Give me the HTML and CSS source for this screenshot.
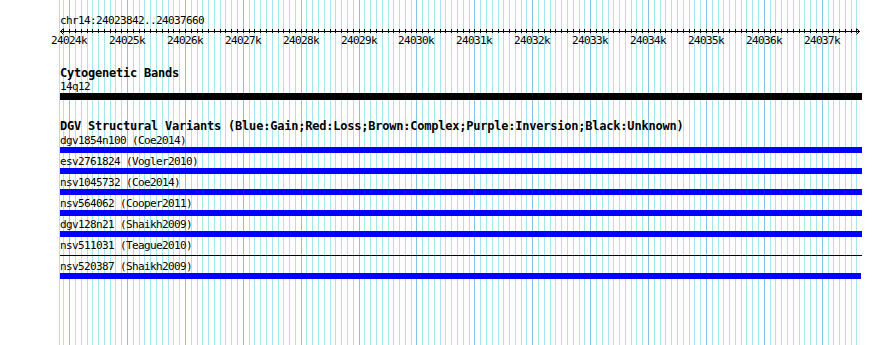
FILE: index.html
```html
<!DOCTYPE html>
<html lang="en">
<head>
<meta charset="utf-8">
<title>chr14:24023842..24037660</title>
<link rel="stylesheet" href="styles.css">
</head>
<body>
<div class="panel">
  <svg class="grid" id="grid" width="890" height="345" xmlns="http://www.w3.org/2000/svg"></svg>
  <div class="content">
    <div class="ruler">
      <div class="seg-label">chr14:24023842..24037660</div>
      <svg class="scale" id="scale" width="890" height="20" xmlns="http://www.w3.org/2000/svg"></svg>
    </div>

    <section class="track cyto">
      <div class="track-title">Cytogenetic Bands</div>
      <div class="feat-label">14q12</div>
      <div class="band"></div>
    </section>

    <section class="track dgv">
      <div class="track-title">DGV Structural Variants (Blue:Gain;Red:Loss;Brown:Complex;Purple:Inversion;Black:Unknown)</div>
      <div class="feature"><div class="feat-label">dgv1854n100 (Coe2014)</div><div class="bar gain"></div></div>
      <div class="feature"><div class="feat-label">esv2761824 (Vogler2010)</div><div class="bar gain"></div></div>
      <div class="feature"><div class="feat-label">nsv1045732 (Coe2014)</div><div class="bar gain"></div></div>
      <div class="feature"><div class="feat-label">nsv564062 (Cooper2011)</div><div class="bar gain"></div></div>
      <div class="feature"><div class="feat-label">dgv128n21 (Shaikh2009)</div><div class="bar gain"></div></div>
      <div class="feature"><div class="feat-label">nsv511031 (Teague2010)</div><div class="bar unknown"></div></div>
      <div class="feature"><div class="feat-label">nsv520387 (Shaikh2009)</div><div class="bar gain short"></div></div>
    </section>
  </div>
</div>
<script src="script.js"></script>
</body>
</html>
```

FILE: styles.css
```css
html, body {
  margin: 0;
  padding: 0;
  background: #ffffff;
}

.panel {
  position: relative;
  width: 890px;
  height: 345px;
  overflow: hidden;
  font-family: "DejaVu Sans Mono", "Liberation Mono", monospace;
  color: #000;
}

.grid {
  position: absolute;
  left: 0;
  top: 0;
  z-index: 0;
}

.grid .minor { stroke: #a8e6ee; stroke-width: 1; }
.grid .major { stroke: #88c4e4; stroke-width: 1; }

.content {
  position: relative;
  z-index: 1;
}

.ruler {
  padding-top: 14px;
}

.seg-label,
.feat-label {
  padding-left: 60px;
  height: 13px;
  line-height: 13px;
  font-size: 11px;
  letter-spacing: -0.62px;
  white-space: nowrap;
}

.scale {
  display: block;
}

.scale line,
.scale polyline {
  stroke: #000;
  stroke-width: 1;
  fill: none;
}

.scale text {
  font-family: "DejaVu Sans Mono", "Liberation Mono", monospace;
  font-size: 11px;
  letter-spacing: -0.62px;
  fill: #000;
}

.track {
  display: flex;
  flex-direction: column;
}

.cyto {
  margin-top: 20px;
}

.dgv {
  margin-top: 20px;
}

.track-title {
  padding-left: 60px;
  height: 13px;
  line-height: 13px;
  font-size: 12px;
  font-weight: bold;
  letter-spacing: -0.22px;
  white-space: nowrap;
}

.dgv .track-title {
  height: 14px;
}

.band {
  margin-left: 60px;
  width: 802px;
  height: 7px;
  background: #000;
}

.feature {
  display: flex;
  flex-direction: column;
  padding-bottom: 2px;
}

.bar {
  margin-left: 60px;
  width: 802px;
  height: 6px;
}

.bar.gain {
  background: #0000ff;
}

.bar.short {
  width: 801px;
}

.bar.unknown {
  display: flex;
  align-items: center;
}

.bar.unknown::before {
  content: "";
  display: block;
  width: 100%;
  height: 1px;
  background: #000;
}
```

FILE: script.js
```js
(function () {
  var NS = 'http://www.w3.org/2000/svg';
  var start = 24023842, end = 24037660, x0 = 60, scale = 0.05789;
  function px(bp) { return Math.round(x0 + (bp - start) * scale); }
  function el(svg, name, attrs) {
    var e = document.createElementNS(NS, name);
    for (var k in attrs) e.setAttribute(k, attrs[k]);
    svg.appendChild(e);
    return e;
  }

  var grid = document.getElementById('grid');
  el(grid, 'line', { x1: 59.5, y1: 0, x2: 59.5, y2: 345, 'class': 'minor', 'shape-rendering': 'crispEdges' });
  for (var bp = 24023900; bp <= end; bp += 100) {
    var x = px(bp) + 0.5;
    el(grid, 'line', { x1: x, y1: 0, x2: x, y2: 345, 'class': bp % 1000 === 0 ? 'major' : 'minor', 'shape-rendering': 'crispEdges' });
  }

  var sc = document.getElementById('scale');
  el(sc, 'line', { x1: 60, y1: 4.5, x2: 860, y2: 4.5, 'shape-rendering': 'crispEdges' });
  el(sc, 'polyline', { points: '63.5,1.5 60.5,4.5 63.5,7.5' });
  el(sc, 'polyline', { points: '856.5,1.5 859.5,4.5 856.5,7.5' });
  for (var b = 24023900; b <= end; b += 100) {
    var tx = px(b) + 0.5;
    el(sc, 'line', { x1: tx, y1: 2, x2: tx, y2: 6, 'shape-rendering': 'crispEdges' });
  }
  for (var k = 24024000; k <= end; k += 1000) {
    var t = el(sc, 'text', { x: px(k), y: 17, 'text-anchor': 'middle' });
    t.textContent = (k / 1000) + 'k';
  }
})();
```
